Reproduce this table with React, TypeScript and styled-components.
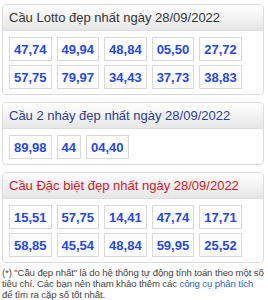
import React from "react";
import styled, { createGlobalStyle } from "styled-components";

const Global = createGlobalStyle`
  html, body { margin: 0; padding: 0; background: #fff; }
  body { font-family: "Liberation Sans", Arial, sans-serif; }
`;

const Page = styled.div`
  width: 262px;
  padding: 4px 0 0 2px;
  display: flex;
  flex-direction: column;
  gap: 7px;
`;

const Panel = styled.section`
  border: 1px solid #dcdcdc;
  border-radius: 4px;
  overflow: hidden;
  background: #fff;
`;

const Header = styled.h3<{ $tone: string }>`
  margin: 0;
  height: 25px;
  padding: 0 6px;
  display: flex;
  align-items: center;
  font-size: 13px;
  font-weight: normal;
  color: ${(p) => p.$tone};
  background: linear-gradient(#ffffff, #e6e6e6);
  border-bottom: 1px solid #dcdcdc;
`;

const Body = styled.div`
  padding: 6px 6px 5px 6px;
  display: flex;
  flex-wrap: wrap;
  gap: 4px 5px;
`;

const Num = styled.span`
  box-sizing: border-box;
  height: 24px;
  padding: 0 4px;
  display: flex;
  align-items: center;
  border: 1px solid #d9d9d9;
  font-size: 13px;
  font-weight: bold;
  color: #2449e6;
`;

const Row = styled.div`
  display: flex;
  gap: 5px;
  width: 100%;
`;

const Note = styled.p`
  margin: -3px 0 0 0;
  width: 264px;
  font-size: 9.6px;
  letter-spacing: -0.12px;
  line-height: 11px;
  color: #444;
`;

const Link = styled.a`
  color: #1f5fc2;
  text-decoration: none;
`;

const panels = [
  {
    title: "Cầu Lotto đẹp nhất ngày 28/09/2022",
    tone: "#333333",
    rows: [
      ["47,74", "49,94", "48,84", "05,50", "27,72"],
      ["57,75", "79,97", "34,43", "37,73", "38,83"],
    ],
  },
  {
    title: "Cầu 2 nháy đẹp nhất ngày 28/09/2022",
    tone: "#2c3d91",
    rows: [["89,98", "44", "04,40"]],
  },
  {
    title: "Cầu Đặc biệt đẹp nhất ngày 28/09/2022",
    tone: "#d8141c",
    rows: [
      ["15,51", "57,75", "14,41", "47,74", "17,71"],
      ["58,85", "45,54", "48,84", "59,95", "25,52"],
    ],
  },
];

export default function App() {
  return (
    <>
      <Global />
      <Page>
        {panels.map((p) => (
          <Panel key={p.title}>
            <Header $tone={p.tone}>{p.title}</Header>
            <Body>
              {p.rows.map((r, i) => (
                <Row key={i}>
                  {r.map((n) => (
                    <Num key={n}>{n}</Num>
                  ))}
                </Row>
              ))}
            </Body>
          </Panel>
        ))}
        <Note>
          (*) "Cầu đẹp nhất" là do hệ thống tự động tính toán theo một số
          tiêu chí. Các bạn nên tham khảo thêm các{" "}
          <Link href="#">công cụ phân tích</Link> để tìm ra cặp số tốt nhất.
        </Note>
      </Page>
    </>
  );
}
